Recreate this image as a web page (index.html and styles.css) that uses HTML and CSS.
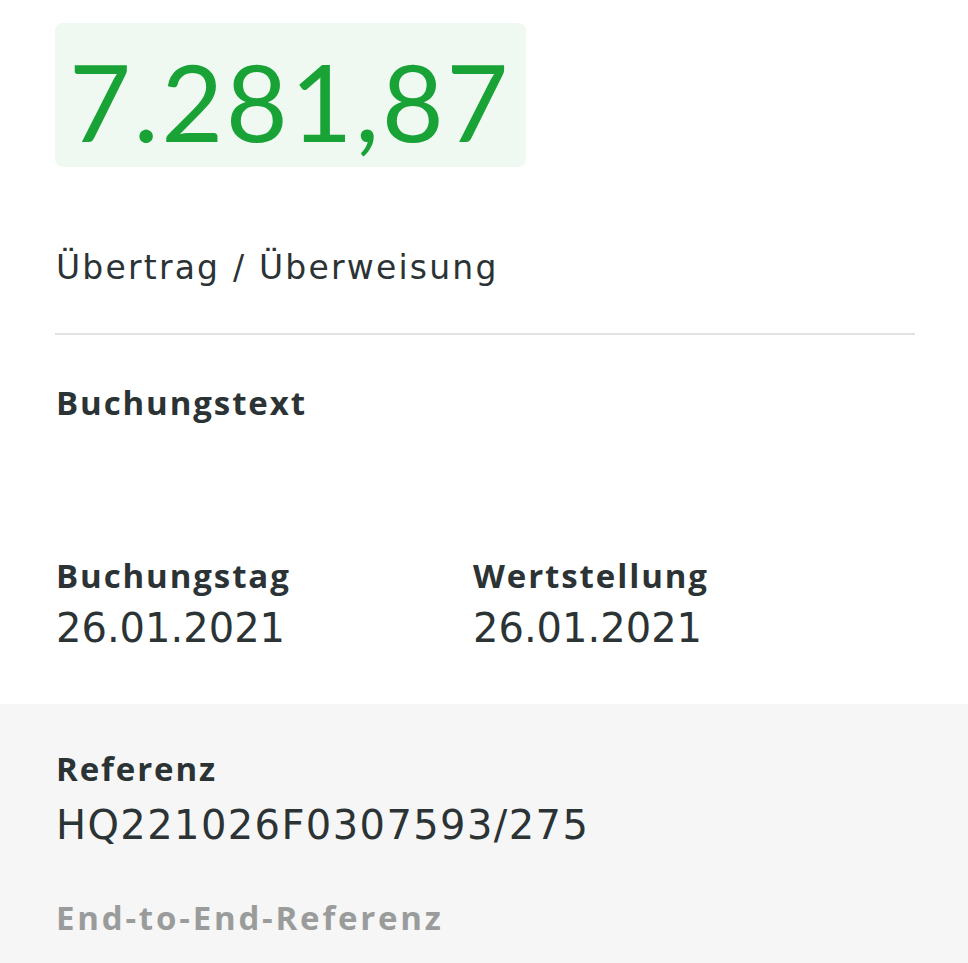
FILE: index.html
```html
<!DOCTYPE html>
<html lang="de">
<head>
    <meta charset="UTF-8">
    <meta name="viewport" content="width=device-width, initial-scale=1.0">
    <title>Umsatzdetails</title>
    <link rel="stylesheet" href="styles.css">
</head>
<body>
    <!-- Betrag und Art -->
    <section class="summary">
        <div class="amount">7.281,87</div>
        <p class="type">Übertrag / Überweisung</p>
    </section>

    <!-- Buchungsdetails -->
    <section class="details">
        <div class="field">
            <h3>Buchungstext</h3>
        </div>

        <div class="field-row">
            <div class="field">
                <h3>Buchungstag</h3>
                <p>26.01.2021</p>
            </div>
            <div class="field">
                <h3>Wertstellung</h3>
                <p>26.01.2021</p>
            </div>
        </div>
    </section>

    <!-- Referenzen -->
    <section class="references">
        <div class="field">
            <h3>Referenz</h3>
            <p class="ref-value">HQ221026F0307593/275</p>
        </div>
        <div class="field muted">
            <h3>End-to-End-Referenz</h3>
        </div>
    </section>
</body>
</html>
```

FILE: styles.css
```css
/* Reset */
* {
    box-sizing: border-box;
    margin: 0;
    padding: 0;
}

body {
    font-family: "DejaVu Sans", Lato, sans-serif;
    color: #2b3335;
    background: #fff;
    height: 963px;
    display: flex;
    flex-direction: column;
}

/* Top summary */
.summary {
    padding: 23px 53px 0 55px;
}

.amount {
    display: inline-block;
    background: #eff8f1;
    color: #19a336;
    border-radius: 8px;
    font-family: Lato, sans-serif;
    font-size: 107px;
    line-height: 133px;
    padding: 11px 15px 0 14px;
    letter-spacing: 2.5px;
}

.type {
    font-size: 33px;
    line-height: 40px;
    letter-spacing: 2.2px;
    margin-top: 81px;
    padding-bottom: 45px;
    border-bottom: 2px solid #e2e2e2;
    padding-left: 1px;
}

/* Detail fields */
.details {
    padding: 48px 53px 0 56px;
}

.field h3 {
    font-family: "Open Sans", Lato, sans-serif;
    font-size: 33px;
    line-height: 40px;
    font-weight: bold;
    letter-spacing: 1.9px;
}

.field p {
    font-size: 40px;
    line-height: 48px;
    margin-top: 8px;
}

.field .ref-value {
    margin-top: 12px;
    letter-spacing: 1.4px;
}

.field-row {
    display: flex;
    margin-top: 133px;
}

.field-row .field {
    width: 417px;
}

/* Gray reference block */
.references {
    background: #f6f6f6;
    flex: 1;
    margin-top: 52px;
    padding: 45px 53px 0 56px;
}

.muted h3 {
    color: #9a9c9c;
    letter-spacing: 2.8px;
    margin-top: 49px;
}
```
